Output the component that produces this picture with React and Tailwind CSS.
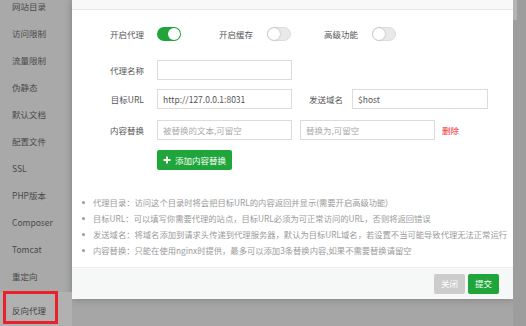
import React from 'react'

const menu = ['网站目录', '访问限制', '流量限制', '伪静态', '默认文档', '配置文件', 'SSL', 'PHP版本', 'Composer', 'Tomcat', '重定向']

const notes = [
  '代理目录：访问这个目录时将会把目标URL的内容返回并显示(需要开启高级功能)',
  '目标URL：可以填写你需要代理的站点，目标URL必须为可正常访问的URL，否则将返回错误',
  '发送域名：将域名添加到请求头传递到代理服务器，默认为目标URL域名，若设置不当可能导致代理无法正常运行',
  '内容替换：只能在使用nginx时提供，最多可以添加3条替换内容,如果不需要替换请留空',
]

function Toggle({ on }) {
  return on ? (
    <div className="flex h-[14px] w-[24px] items-center justify-end rounded-full bg-[#20a53a] pr-[1px]">
      <div className="h-[12px] w-[12px] rounded-full bg-white" />
    </div>
  ) : (
    <div className="flex h-[14px] w-[24px] items-center rounded-full border border-[#dcdcdc] bg-[#e9e9e9]">
      <div className="h-[12px] w-[12px] rounded-full bg-white shadow-[0_0_2px_rgba(0,0,0,0.3)]" />
    </div>
  )
}

function Label({ children, w = 'w-[72px]' }) {
  return <div className={`${w} shrink-0 text-right text-[8.5px] leading-none text-[#555]`}>{children}</div>
}

function Input({ value, placeholder, w = 'w-[135px]' }) {
  return (
    <div className={`${w} flex h-[20px] shrink-0 items-center border border-[#dcdcdc] bg-white px-[5px] text-[8.5px] leading-none`}>
      {value ? <span className="text-[#555]">{value}</span> : <span className="text-[#aaa]">{placeholder}</span>}
    </div>
  )
}

export default function App() {
  return (
    <div
      className="flex h-[326px] w-[526px] overflow-hidden bg-[#a6a6a6]"
      style={{ fontFamily: '"Noto Sans CJK SC", "Open Sans", sans-serif' }}
    >
      {/* sidebar */}
      <div className="flex w-[72px] shrink-0 flex-col bg-[#a9a9a9] pt-0">
        <div className="-mt-[7px] flex flex-col">
          {menu.map((m) => (
            <div key={m} className="flex h-[27px] items-center pl-[12px] text-[8.5px] text-[#4a4a4a]">
              {m}
            </div>
          ))}
          <div className="relative mt-[2px] flex h-[40px] items-center bg-[#b1b1b1] pb-[4px] pl-[12px] text-[8.5px] text-[#3e3e3e]">
            反向代理
            <div className="absolute left-[3px] top-[-1px] h-[33px] w-[55px] border-[3px] border-[#e8212b]" />
          </div>
        </div>
      </div>

      {/* modal */}
      <div className="flex w-[441px] shrink-0 flex-col">
        <div className="flex h-[299px] flex-col bg-white shadow-[0_0_8px_rgba(0,0,0,0.25)]">
          <div className="h-[10px] border-b border-[#e6e6e6] bg-[#f8f8f8]" />

          <div className="flex flex-col">
            <div className="mt-[17px] flex h-[14px] items-center">
              <Label>开启代理</Label>
              <div className="ml-[13px]"><Toggle on /></div>
              <Label>开启缓存</Label>
              <div className="ml-[14px]"><Toggle /></div>
              <Label w="w-[67px]">高级功能</Label>
              <div className="ml-[14px]"><Toggle /></div>
            </div>

            <div className="mt-[19px] flex items-center">
              <Label>代理名称</Label>
              <div className="ml-[13px]"><Input value="" placeholder="" /></div>
            </div>

            <div className="mt-[9px] flex items-center">
              <Label>目标URL</Label>
              <div className="ml-[13px]"><Input value="http://127.0.0.1:8031" /></div>
              <Label w="w-[51px]">发送域名</Label>
              <div className="ml-[9px]"><Input value="$host" w="w-[136px]" /></div>
            </div>

            <div className="mt-[11px] flex items-center">
              <Label>内容替换</Label>
              <div className="ml-[13px]"><Input placeholder="被替换的文本,可留空" /></div>
              <div className="ml-[8px]"><Input placeholder="替换为,可留空" /></div>
              <span className="ml-[7px] text-[8.5px] text-[#f0282d]">删除</span>
            </div>

            <div className="ml-[85px] mt-[10px] flex h-[20px] w-[75px] items-center justify-center gap-[4px] rounded-[2px] bg-[#20a53a] text-[8.5px] text-white">
              <svg width="8" height="8" viewBox="0 0 8 8">
                <path d="M4 0.5v7M0.5 4h7" stroke="white" strokeWidth="2" />
              </svg>
              添加内容替换
            </div>

            <ul className="mt-[24px] flex flex-col">
              {notes.map((n) => (
                <li key={n} className="flex h-[16px] items-center text-[8.3px] text-[#9a9a9a]">
                  <span className="ml-[10px] h-[3px] w-[3px] shrink-0 rounded-full bg-[#999]" />
                  <span className="ml-[8px] whitespace-nowrap">{n}</span>
                </li>
              ))}
            </ul>
          </div>

          <div className="flex-1" />

          <div className="flex h-[32px] items-center justify-end gap-[3px] border-t border-[#ececec] bg-[#f6f7f7] pr-[14px]">
            <div className="flex h-[20px] w-[31px] items-center justify-center rounded-[2px] bg-[#cccccc] text-[8.5px] text-white">关闭</div>
            <div className="flex h-[20px] w-[31px] items-center justify-center rounded-[2px] bg-[#20a53a] text-[8.5px] text-white">提交</div>
          </div>
        </div>
      </div>

      {/* right of modal */}
      <div className="flex flex-1 flex-col bg-[#9d9d9d]">
        <div className="h-[20px] w-[4px] bg-[#b3b3b3]" />
      </div>
    </div>
  )
}
